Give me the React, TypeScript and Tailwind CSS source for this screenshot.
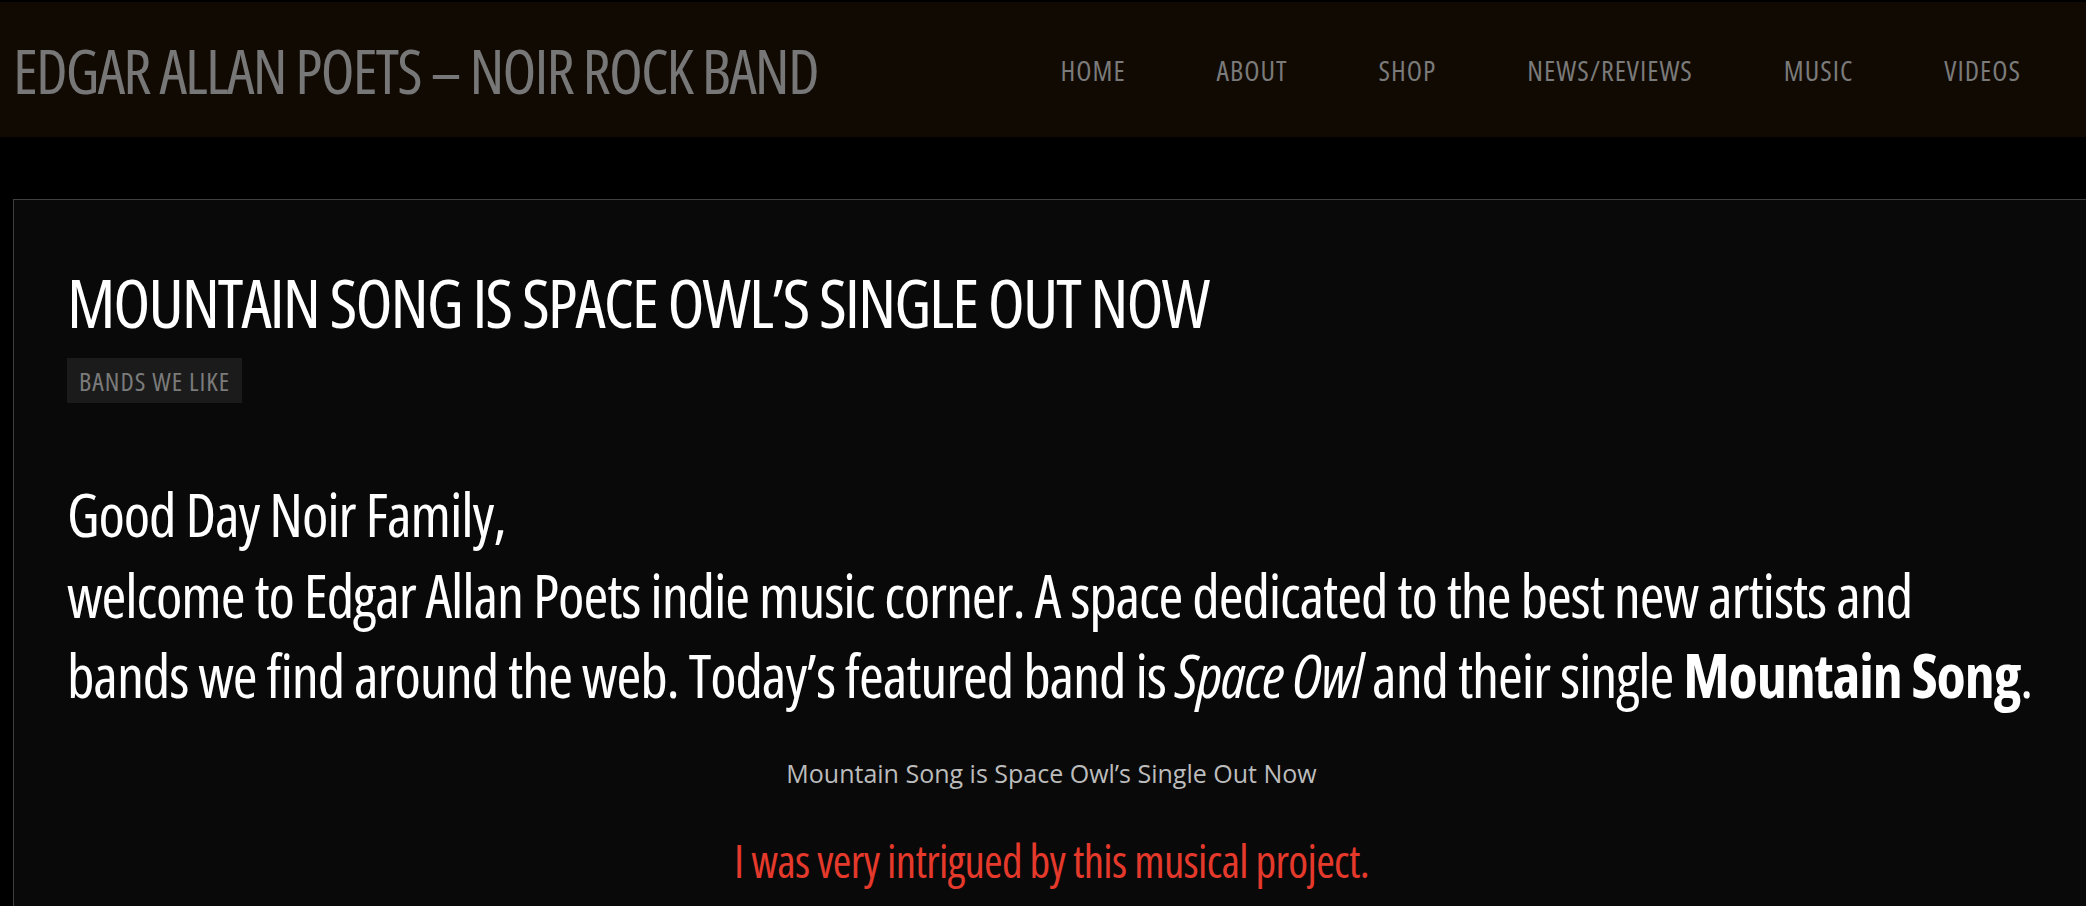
export default function App() {
  const nav = ["HOME", "ABOUT", "SHOP", "NEWS/REVIEWS", "MUSIC", "VIDEOS"];
  return (
    <div className="min-h-[906px] w-full overflow-hidden bg-black pt-[2px] font-['Open_Sans',sans-serif] font-stretch-condensed">
      <header className="flex h-[135px] items-center bg-[#110a03] pl-[13px] pr-[65px]">
        <div className="text-[62px] leading-none tracking-[-1.8px] text-[#777777] whitespace-nowrap">
          EDGAR ALLAN POETS – NOIR ROCK BAND
        </div>
        <nav className="ml-auto flex items-center gap-[91px]">
          {nav.map((n) => (
            <a key={n} className="text-[28px] leading-none tracking-[1px] text-[#7a7a7a] whitespace-nowrap">
              {n}
            </a>
          ))}
        </nav>
      </header>

      <main className="ml-[13px] mr-[-3px] mt-[62px] min-h-[710px] border-l border-t border-[#3f3f3f] bg-[#090909] px-[53px] pt-[68px]">
        <h1 className="text-[68px] leading-none tracking-[-2px] text-white whitespace-nowrap">
          MOUNTAIN SONG IS SPACE OWL’S SINGLE OUT NOW
        </h1>
        <div className="mt-[22px] flex">
          <span className="h-[45px] bg-[#1b1b1b] px-[12px] pt-[10px] text-[26px] leading-none tracking-[1px] text-[#7b7b7b] whitespace-nowrap">
            BANDS WE LIKE
          </span>
        </div>
        <p className="mt-[71px] text-[60px] leading-[80.5px] tracking-[-1.1px] text-white whitespace-nowrap">
          Good Day Noir Family,
          <br />
          welcome to Edgar Allan Poets indie music corner. A space dedicated to the best new artists and
          <br />
          bands we find around the web. Today’s featured band is <em>Space Owl</em> and their single{" "}
          <strong className="font-bold">Mountain Song</strong>.
        </p>
        <p className="mt-[45.6px] text-center text-[25px] leading-none font-stretch-normal text-[#bcbcbc]">
          Mountain Song is Space Owl’s Single Out Now
        </p>
        <p className="mt-[52px] text-center text-[45px] leading-none tracking-[-0.65px] text-[#e5392b]">
          I was very intrigued by this musical project.
        </p>
      </main>
    </div>
  );
}
